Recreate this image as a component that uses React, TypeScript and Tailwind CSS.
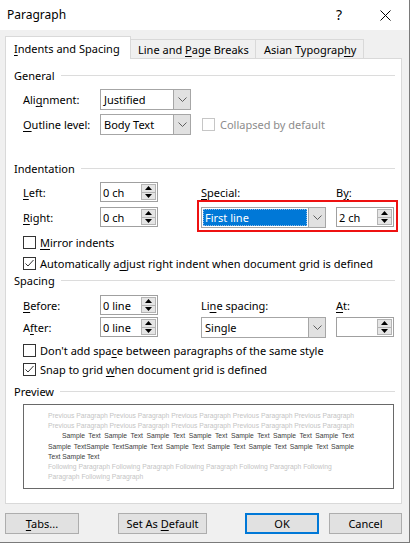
import React from "react";

type Kids = { children: React.ReactNode };

function U({ children }: Kids) {
  return <span className="underline decoration-1 underline-offset-[2px]">{children}</span>;
}

function Chevron() {
  return (
    <svg width="9" height="5" viewBox="0 0 9 5" className="text-[#5f5f5f]">
      <path d="M0.5 0.5 L4.5 4.5 L8.5 0.5" fill="none" stroke="currentColor" strokeWidth="1" />
    </svg>
  );
}

function Select({ value, className, active }: { value: string; className: string; active?: boolean }) {
  return (
    <div className={`flex h-[21px] border border-[#a6a6a6] bg-white ${className}`}>
      <div className="flex flex-1 p-px">
        {active ? (
          <span className="flex w-full items-center border border-dotted border-[#8ab8e6] bg-[#0078d7] pl-[1px] text-white">
            {value}
          </span>
        ) : (
          <span className="flex items-center pl-[2px]">{value}</span>
        )}
      </div>
      <div className="flex w-[17px] items-center justify-center border-l border-[#a6a6a6] bg-[#e1e1e1]">
        <Chevron />
      </div>
    </div>
  );
}

function Arrow({ up }: { up?: boolean }) {
  return (
    <svg width="7" height="4" viewBox="0 0 7 4">
      <path d={up ? "M0 4 L3.5 0 L7 4 Z" : "M0 0 L3.5 4 L7 0 Z"} fill="#000" />
    </svg>
  );
}

function Spin({ value }: { value?: string }) {
  return (
    <div className="flex h-[20px] w-[58px] border border-[#a0a0a0] bg-white p-px">
      <div className="flex flex-1 items-center pl-[1px]">{value}</div>
      <div className="flex w-[15px] flex-col">
        <div className="flex flex-1 items-center justify-center border border-[#b4b4b4] bg-[#e5e5e5]">
          <Arrow up />
        </div>
        <div className="-mt-px flex flex-1 items-center justify-center border border-[#b4b4b4] bg-[#e5e5e5]">
          <Arrow />
        </div>
      </div>
    </div>
  );
}

function Check({ checked, disabled }: { checked?: boolean; disabled?: boolean }) {
  return (
    <span
      className={`flex h-[13px] w-[13px] shrink-0 items-center justify-center border bg-white ${
        disabled ? "border-[#c6c6c6]" : "border-[#333333]"
      }`}
    >
      {checked && (
        <svg width="11" height="11" viewBox="0 0 11 11">
          <path d="M1.5 5.5 L4 8 L9.5 2" fill="none" stroke="#333" strokeWidth="1" />
        </svg>
      )}
    </span>
  );
}

function Group({ title }: { title: string }) {
  return (
    <div className="flex h-[16px] items-center">
      <span>{title}</span>
      <div className="ml-[6px] h-px flex-1 bg-[#dcdcdc]" />
    </div>
  );
}

function CheckRow({ children, checked, className }: Kids & { checked?: boolean; className: string }) {
  return (
    <div className={`flex h-[13px] items-center pl-[9px] ${className}`}>
      <Check checked={checked} />
      <span className="ml-[4px]">{children}</span>
    </div>
  );
}

function Button({ children, className }: Kids & { className: string }) {
  return (
    <button className={`flex h-[21px] items-center justify-center bg-[#e1e1e1] ${className}`}>
      <span>{children}</span>
    </button>
  );
}

const prev = "Previous Paragraph Previous Paragraph Previous Paragraph Previous Paragraph Previous Paragraph";

export default function App() {
  return (
    <div className="h-[544px] w-[411px] bg-white font-['Noto_Sans',sans-serif] text-[11px] leading-none whitespace-nowrap text-black">
      <div className="flex h-[543px] w-[410px] flex-col border-r border-b border-[#7a7a7a]">
        <div className="flex h-[30px] shrink-0 items-center bg-white pl-[7px]">
          <span className="text-[12px]">Paragraph</span>
          <span className="ml-auto text-[14px]">?</span>
          <svg width="11" height="11" viewBox="0 0 11 11" className="mr-[18px] ml-[38px]">
            <path d="M0.5 0.5 L10.5 10.5 M10.5 0.5 L0.5 10.5" stroke="#000" strokeWidth="1" />
          </svg>
        </div>

        <div className="flex flex-1 flex-col bg-[#f0f0f0] px-[5px]">
          <div className="flex h-[28px] shrink-0 items-end">
            <div className="relative z-10 -mb-px flex h-[23px] w-[126px] items-center border-x border-t border-[#d9d9d9] bg-white pt-[1px] pl-[8px]">
              <span>
                <U>I</U>ndents and Spacing
              </span>
            </div>
            <div className="flex h-[19px] w-[125px] items-center border-t border-r border-[#d9d9d9] bg-[#f0f0f0] pt-[1px] pl-[7px]">
              <span>
                Line and <U>P</U>age Breaks
              </span>
            </div>
            <div className="flex h-[19px] w-[108px] items-center border-t border-r border-[#d9d9d9] bg-[#f0f0f0] pt-[1px] pl-[8px]">
              <span>
                Asian Typograp<U>h</U>y
              </span>
            </div>
          </div>

          <div className="flex h-[446px] w-[397px] flex-col border border-[#d9d9d9] bg-white pt-[8px] pr-[6px] pl-[8px]">
            <Group title="General" />
            <div className="mt-[6px] flex h-[21px] items-center pl-[9px]">
              <span className="w-[77px]">
                Ali<U>g</U>nment:
              </span>
              <Select value="Justified" className="w-[91px]" />
            </div>
            <div className="mt-[4px] flex h-[21px] items-center pl-[9px]">
              <span className="w-[77px]">
                <U>O</U>utline level:
              </span>
              <Select value="Body Text" className="w-[91px]" />
              <span className="ml-[11px]">
                <Check disabled />
              </span>
              <span className="ml-[5px] text-[#8c8c8c]">Collapsed by default</span>
            </div>

            <div className="mt-[25px]">
              <Group title="Indentation" />
            </div>
            <div className="mt-[6px] flex h-[20px] items-center pl-[9px]">
              <span className="w-[77px]">
                <U>L</U>eft:
              </span>
              <Spin value="0 ch" />
              <span className="ml-[43px] w-[135px]">
                <U>S</U>pecial:
              </span>
              <span>
                B<U>y</U>:
              </span>
            </div>
            <div className="mt-[5px] flex h-[20px] items-center pl-[9px]">
              <span className="w-[77px]">
                <U>R</U>ight:
              </span>
              <Spin value="0 ch" />
              <div className="relative ml-[43px] flex items-center">
                <Select value="First line" className="w-[125px]" active />
                <div className="ml-[10px]">
                  <Spin value="2 ch" />
                </div>
                <div className="pointer-events-none absolute -top-[7px] -right-[4px] -bottom-[4px] -left-[4px] border-2 border-[#ee1111]" />
              </div>
            </div>
            <CheckRow className="mt-[9px]">
              <U>M</U>irror indents
            </CheckRow>
            <CheckRow className="mt-[8px]" checked>
              Automatically a<U>d</U>just right indent when document grid is defined
            </CheckRow>

            <div className="mt-[2px]">
              <Group title="Spacing" />
            </div>
            <div className="mt-[7px] flex h-[20px] items-center pl-[9px]">
              <span className="w-[77px]">
                <U>B</U>efore:
              </span>
              <Spin value="0 line" />
              <span className="ml-[43px] w-[135px]">
                Li<U>n</U>e spacing:
              </span>
              <span>
                <U>A</U>t:
              </span>
            </div>
            <div className="mt-[2px] flex h-[20px] items-center pl-[9px]">
              <span className="w-[77px]">
                A<U>f</U>ter:
              </span>
              <Spin value="0 line" />
              <Select value="Single" className="ml-[43px] w-[125px]" />
              <div className="ml-[10px]">
                <Spin />
              </div>
            </div>
            <CheckRow className="mt-[7px]">
              Don't add spa<U>c</U>e between paragraphs of the same style
            </CheckRow>
            <CheckRow className="mt-[6px]" checked>
              Snap to grid <U>w</U>hen document grid is defined
            </CheckRow>

            <div className="mt-[7px]">
              <Group title="Preview" />
            </div>
            <div className="mt-[5px] ml-[9px] h-[85px] w-[371px] border border-[#696969] bg-white pt-[6px] pl-[24px] font-['Liberation_Sans',sans-serif] text-[6.75px] leading-[10.2px]">
              <div className="w-[306px]">
                <div className="text-[#c4c4c4] [text-align-last:justify]">{prev}</div>
                <div className="text-[#c4c4c4] [text-align-last:justify]">{prev}</div>
                <div className="pl-[14px] text-[#3c3c3c] [text-align-last:justify]">
                  Sample Text Sample Text Sample Text Sample Text Sample Text Sample Text Sample Text
                </div>
                <div className="text-[#3c3c3c] [text-align-last:justify]">
                  Sample TextSample TextSample Text Sample Text Sample Text Sample Text Sample Text Sample
                </div>
                <div className="text-[#3c3c3c]">Text Sample Text</div>
                <div className="text-[#c4c4c4]">
                  Following Paragraph Following Paragraph Following Paragraph Following Paragraph Following
                </div>
                <div className="text-[#c4c4c4]">Paragraph Following Paragraph</div>
              </div>
            </div>
          </div>

          <div className="mt-[9px] flex">
            <Button className="w-[74px] border border-[#adadad]">
              <U>T</U>abs...
            </Button>
            <Button className="ml-[39px] w-[89px] border border-[#adadad]">
              Set As <U>D</U>efault
            </Button>
            <Button className="ml-[38px] w-[74px] border-2 border-[#0078d7]">OK</Button>
            <Button className="ml-[10px] w-[73px] border border-[#adadad]">Cancel</Button>
          </div>
        </div>
      </div>
    </div>
  );
}
